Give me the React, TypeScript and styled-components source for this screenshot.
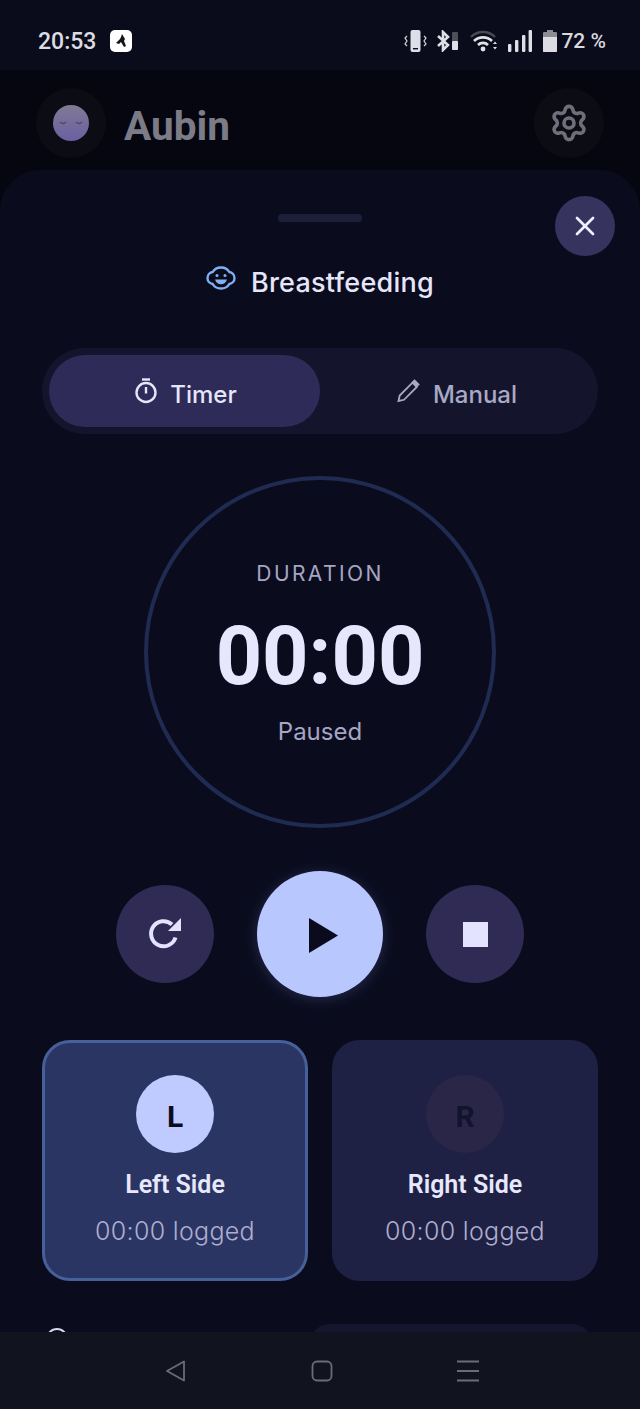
import React from "react";
import styled, { createGlobalStyle } from "styled-components";
import { Settings, X } from "lucide-react";

const Global = createGlobalStyle`
  html, body { margin: 0; padding: 0; background: #0a0c1e; }
  * { box-sizing: border-box; }
`;

const Screen = styled.div`
  width: 640px;
  height: 1409px;
  display: flex;
  flex-direction: column;
  overflow: hidden;
  background: #05060f;
  font-family: Inter, "Liberation Sans", sans-serif;
`;

const StatusBar = styled.div`
  height: 70px;
  flex: none;
  background: #0a0c1c;
  display: flex;
  align-items: center;
  justify-content: space-between;
  padding: 12px 34px 0 38px;
`;

const StatusGroup = styled.div`
  display: flex;
  align-items: center;
`;

const Clock = styled.span`
  font: 500 23px Roboto, sans-serif;
  color: #dcdce2;
  margin-right: 14px;
`;

const NotifBadge = styled.div`
  width: 22px;
  height: 22px;
  border-radius: 5px;
  background: #fff;
  display: flex;
  align-items: center;
  justify-content: center;
`;

const Battery = styled.span`
  font: 500 21px Roboto, sans-serif;
  color: #d8d8de;
  margin-left: 4px;
`;

const StatusIcon = styled.svg<{ $gap?: number }>`
  display: block;
  margin-left: ${(p) => p.$gap ?? 0}px;
`;

const Header = styled.div`
  height: 100px;
  flex: none;
  display: flex;
  align-items: center;
  justify-content: space-between;
  padding: 6px 36px 0;
`;

const HeaderLeft = styled.div`
  display: flex;
  align-items: center;
  gap: 18px;
`;

const RoundDim = styled.div`
  width: 70px;
  height: 70px;
  border-radius: 50%;
  background: #0c0c14;
  display: flex;
  align-items: center;
  justify-content: center;
  color: #6f6f7c;
`;

const Face = styled.div`
  width: 36px;
  height: 36px;
  border-radius: 50%;
  background: linear-gradient(#817a94, #6a5fa4);
  display: flex;
  align-items: center;
  justify-content: center;
`;

const Name = styled.span`
  font: 700 40.5px Roboto, sans-serif;
  color: #7c7c88;
  padding-top: 6px;
`;

const Sheet = styled.div`
  flex: 1;
  min-height: 0;
  position: relative;
  background: #0a0c1e;
  border-radius: 40px 40px 0 0;
  padding: 44px 42px 0;
  overflow: hidden;
  display: flex;
  flex-direction: column;
  align-items: center;
`;

const Handle = styled.div`
  width: 84px;
  height: 8px;
  border-radius: 4px;
  background: #1d1f38;
  flex: none;
`;

const CloseButton = styled.button`
  position: absolute;
  top: 26px;
  right: 25px;
  width: 60px;
  height: 60px;
  border: 0;
  padding: 0;
  border-radius: 50%;
  background: #37335f;
  color: #eeeeff;
  display: flex;
  align-items: center;
  justify-content: center;
`;

const Title = styled.div`
  margin-top: 42px;
  height: 36px;
  flex: none;
  display: flex;
  align-items: center;
  gap: 15px;
  color: #e6e6fa;
  font-size: 27px;
  font-weight: 500;
  letter-spacing: 0.25px;
`;

const TitleIcon = styled.svg`
  display: block;
  margin-bottom: 8px;
`;

const Tabs = styled.div`
  margin-top: 48px;
  width: 100%;
  height: 86px;
  flex: none;
  padding: 7px;
  border-radius: 43px;
  background: #14152c;
  display: grid;
  grid-template-columns: 271px 1fr;
`;

const Tab = styled.div<{ $active?: boolean }>`
  border-radius: 36px;
  padding-left: 3px;
  display: flex;
  align-items: center;
  justify-content: center;
  gap: 13px;
  font-size: 24px;
  font-weight: 500;
  background: ${(p) => (p.$active ? "#2e2b58" : "transparent")};
  color: ${(p) => (p.$active ? "#e6e6fa" : "#a9a9c6")};
`;

const TabLabel = styled.span`
  padding-top: 6px;
`;

const Ring = styled.div`
  margin-top: 42px;
  width: 352px;
  height: 352px;
  flex: none;
  border-radius: 50%;
  border: 4px solid #1f2b50;
  display: flex;
  flex-direction: column;
  align-items: center;
`;

const RingLabel = styled.div`
  margin-top: 81px;
  font-size: 21px;
  line-height: 26px;
  letter-spacing: 2.4px;
  color: #a6a6c4;
`;

const Time = styled.div`
  margin-top: 22px;
  font: 700 81px/96px Roboto, sans-serif;
  color: #e6e6fd;
`;

const RingStatus = styled.div`
  margin-top: 12px;
  font-size: 24px;
  line-height: 30px;
  color: #a6a6c4;
`;

const Controls = styled.div`
  margin-top: 43px;
  display: flex;
  align-items: center;
  gap: 43px;
  flex: none;
`;

const SmallControl = styled.div`
  width: 98px;
  height: 98px;
  border-radius: 50%;
  background: #2f2b55;
  display: flex;
  align-items: center;
  justify-content: center;
`;

const PlayControl = styled.div`
  width: 126px;
  height: 126px;
  border-radius: 50%;
  background: #b9c7ff;
  box-shadow: 0 2px 14px rgba(150, 170, 255, 0.2);
  display: flex;
  align-items: center;
  justify-content: center;
`;

const PlayGlyph = styled.svg`
  display: block;
  margin-left: 7px;
  margin-top: 2px;
`;

const StopSquare = styled.div`
  width: 25px;
  height: 25px;
  background: #e4e3ff;
`;

const Sides = styled.div`
  margin-top: 43px;
  width: 100%;
  display: grid;
  grid-template-columns: 266px 266px;
  justify-content: space-between;
  flex: none;
`;

const SideCard = styled.div<{ $active?: boolean }>`
  height: 241px;
  border-radius: 28px;
  background: ${(p) => (p.$active ? "#2a3564" : "#1f2144")};
  border: 3px solid ${(p) => (p.$active ? "#46609a" : "#1f2144")};
  display: flex;
  flex-direction: column;
  align-items: center;
  padding-top: 32px;
`;

const SideCircle = styled.div<{ $active?: boolean }>`
  width: 78px;
  height: 78px;
  border-radius: 50%;
  padding-top: 4px;
  background: ${(p) => (p.$active ? "#bfcbff" : "#2a2648")};
  color: ${(p) => (p.$active ? "#0a0c1e" : "#12132c")};
  font: 700 30px Roboto, sans-serif;
  display: flex;
  align-items: center;
  justify-content: center;
`;

const SideName = styled.div`
  margin-top: 16px;
  font: 600 25px/32px Roboto, sans-serif;
  color: #e8e8fc;
`;

const SideLogged = styled.div`
  margin-top: 15px;
  font-size: 25px;
  font-weight: 300;
  letter-spacing: 0.3px;
  line-height: 30px;
  color: #aeaece;
`;

const Peek = styled.div`
  margin-top: 43px;
  width: 100%;
  display: flex;
  justify-content: space-between;
  align-items: flex-start;
  flex: none;
`;

const PeekIcon = styled.div`
  margin: 4px 0 0 4px;
  width: 22px;
  height: 22px;
  border: 2px solid #d8d8ec;
  border-radius: 50%;
`;

const PeekField = styled.div`
  width: 282px;
  height: 40px;
  margin-right: 6px;
  border-radius: 20px;
  background: #15162e;
`;

const NavBar = styled.div`
  height: 77px;
  flex: none;
  background: #11141f;
  display: grid;
  grid-template-columns: 146px 146px 146px;
  justify-content: center;
  justify-items: center;
  align-items: center;
  padding-left: 4px;
`;

const NavIcon = styled.svg`
  display: block;
`;

export default function App() {
  return (
    <Screen>
      <Global />
      <StatusBar>
        <StatusGroup>
          <Clock>20:53</Clock>
          <NotifBadge>
            <svg width="14" height="16" viewBox="0 0 14 16">
              <path d="M8 1l3 5-1 2 2 5-2 1-3-5-2 2-3-1 4-4 1-2z" fill="#14141c" />
            </svg>
          </NotifBadge>
        </StatusGroup>
        <StatusGroup>
          <StatusIcon width="23" height="22" viewBox="0 0 23 22">
            <rect x="6.5" y="0" width="10" height="22" rx="2" fill="#dedee6" />
            <rect x="9" y="18" width="5" height="1.4" fill="#0a0c1c" />
            <path d="M3 6l-2 2 2 3-2 3 2 2M20 6l2 2-2 3 2 3-2 2" fill="none" stroke="#d4d4dc" strokeWidth="1.2" />
          </StatusIcon>
          <StatusIcon $gap={9} width="23" height="22" viewBox="0 0 23 22">
            <path d="M2 6l10 9-5 5V2l5 5-10 9" fill="none" stroke="#dedee6" strokeWidth="2.6" />
            <rect x="16" y="2" width="6" height="18" rx="1" fill="#4e4e58" />
            <rect x="16" y="11" width="6" height="9" rx="1" fill="#dedee6" />
          </StatusIcon>
          <StatusIcon $gap={11} width="28" height="22" viewBox="0 0 28 22">
            <path d="M1 7a17 17 0 0 1 24 0" fill="none" stroke="#4a4a55" strokeWidth="2.4" />
            <path d="M4 11a13 13 0 0 1 18 0M8 15a7 7 0 0 1 10 0" fill="none" stroke="#e2e2e8" strokeWidth="2.6" />
            <circle cx="13" cy="19" r="2.4" fill="#e2e2e8" />
            <path d="M23 14h4l-2-2.500zM23 17h4l-2 2.500z" fill="#dedee6" />
          </StatusIcon>
          <StatusIcon $gap={10} width="24" height="22" viewBox="0 0 24 22">
            <rect x="0" y="14" width="3.400" height="8" rx="1" fill="#dedee6" />
            <rect x="7" y="10" width="3.400" height="12" rx="1" fill="#dedee6" />
            <rect x="14" y="5" width="3.400" height="17" rx="1" fill="#dedee6" />
            <rect x="20.600" y="0" width="3.400" height="22" rx="1" fill="#dedee6" />
          </StatusIcon>
          <StatusIcon $gap={11} width="14" height="22" viewBox="0 0 14 22">
            <path d="M4 0h6v2h3a1 1 0 0 1 1 1v18a1 1 0 0 1-1 1H1a1 1 0 0 1-1-1V3a1 1 0 0 1 1-1h3z" fill="#8c8c94" />
            <path d="M0 7h14v14a1 1 0 0 1-1 1H1a1 1 0 0 1-1-1z" fill="#dcdce2" />
          </StatusIcon>
          <Battery>72 %</Battery>
        </StatusGroup>
      </StatusBar>

      <Header>
        <HeaderLeft>
          <RoundDim>
            <Face>
              <svg width="24" height="8" viewBox="0 0 24 8">
                <path d="M1 3q3 3 6 0M17 3q3 3 6 0" fill="none" stroke="#4f4868" strokeWidth="1.200" />
              </svg>
            </Face>
          </RoundDim>
          <Name>Aubin</Name>
        </HeaderLeft>
        <RoundDim>
          <Settings size={40} strokeWidth={2.2} />
        </RoundDim>
      </Header>

      <Sheet>
        <Handle />
        <CloseButton>
          <X size={32} strokeWidth={2} />
        </CloseButton>
        <Title>
          <TitleIcon width="30" height="24" viewBox="0 0 30 24" fill="none" stroke="#7fb0f2" strokeWidth="2.4">
            <path d="M15 1.500c3.800 0 6.800 1.800 8.300 4.500 3 .4 5.200 2.900 5.200 6s-2.200 5.600-5.200 6c-1.500 2.700-4.500 4.500-8.300 4.500s-6.800-1.800-8.300-4.500c-3-.4-5.200-2.900-5.200-6s2.200-5.600 5.200-6C8.200 3.300 11.200 1.500 15 1.500z" />
            <circle cx="11" cy="9.500" r="1.500" fill="#7fb0f2" stroke="none" />
            <circle cx="19" cy="9.500" r="1.500" fill="#7fb0f2" stroke="none" />
            <path d="M9 13.500h12c-.8 3.200-3.200 4.700-6 4.700s-5.200-1.500-6-4.700z" fill="#7fb0f2" stroke="none" />
          </TitleIcon>
          Breastfeeding
        </Title>
        <Tabs>
          <Tab $active>
            <svg width="22" height="26" viewBox="0 0 22 26" fill="none" stroke="#e6e6fa" strokeWidth="2.400">
              <path d="M7 1.500h8" />
              <circle cx="11" cy="14.500" r="9.500" />
              <path d="M11 9v6.500" />
            </svg>
            <TabLabel>Timer</TabLabel>
          </Tab>
          <Tab>
            <svg width="23" height="24" viewBox="0 0 23 24" fill="none" stroke="#a9a9c6" strokeWidth="1.800">
              <path d="M1.500 22l1.200-5.500L15.500 3.700l4.300 4.300L7 20.800z" />
              <path d="M17.500 1.500l4 4-1.800 1.800-4-4z" fill="#a9a9c6" />
            </svg>
            <TabLabel>Manual</TabLabel>
          </Tab>
        </Tabs>
        <Ring>
          <RingLabel>DURATION</RingLabel>
          <Time>00:00</Time>
          <RingStatus>Paused</RingStatus>
        </Ring>
        <Controls>
          <SmallControl>
            <svg width="36" height="36" viewBox="0 0 36 36" fill="none">
              <path d="M28.500 21.500A12.500 12.500 0 1 1 25 8.500" stroke="#e4e3ff" strokeWidth="4" />
              <path d="M34 2v13H21z" fill="#e4e3ff" />
            </svg>
          </SmallControl>
          <PlayControl>
            <PlayGlyph width="29" height="35" viewBox="0 0 29 35">
              <path d="M0 0l29 17.500L0 35z" fill="#0a0c1e" />
            </PlayGlyph>
          </PlayControl>
          <SmallControl>
            <StopSquare />
          </SmallControl>
        </Controls>
        <Sides>
          <SideCard $active>
            <SideCircle $active>L</SideCircle>
            <SideName>Left Side</SideName>
            <SideLogged>00:00 logged</SideLogged>
          </SideCard>
          <SideCard>
            <SideCircle>R</SideCircle>
            <SideName>Right Side</SideName>
            <SideLogged>00:00 logged</SideLogged>
          </SideCard>
        </Sides>
        <Peek>
          <PeekIcon />
          <PeekField />
        </Peek>
      </Sheet>

      <NavBar>
        <NavIcon width="24" height="24" viewBox="0 0 24 24" fill="none" stroke="#6a6c76" strokeWidth="1.800" strokeLinejoin="round">
          <path d="M20 2.500v19L3 12z" />
        </NavIcon>
        <NavIcon width="24" height="24" viewBox="0 0 24 24" fill="none" stroke="#6a6c76" strokeWidth="1.800">
          <rect x="2.500" y="2.500" width="19" height="19" rx="4.500" />
        </NavIcon>
        <NavIcon width="24" height="24" viewBox="0 0 24 24" fill="none" stroke="#6a6c76" strokeWidth="1.800">
          <path d="M1 2.500h22M1 12h22M1 21.500h22" />
        </NavIcon>
      </NavBar>
    </Screen>
  );
}
